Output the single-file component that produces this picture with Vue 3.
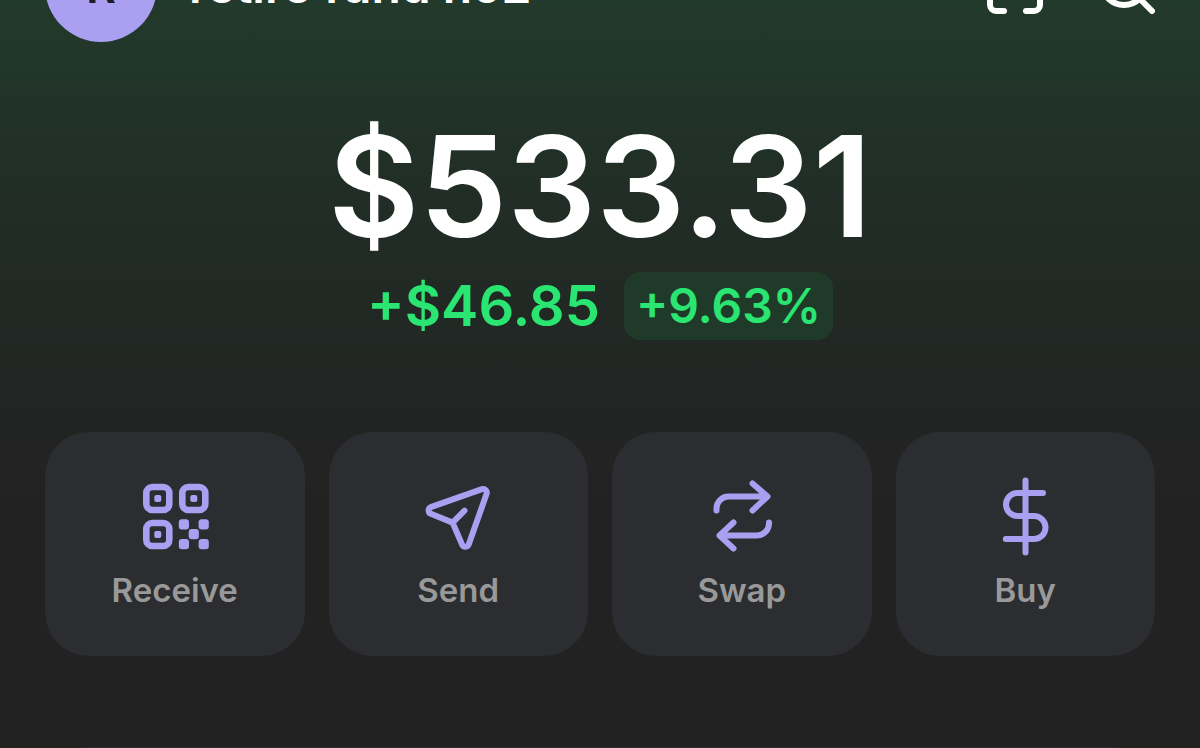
<script setup>
const account = {
  name: 'retire fund no2',
  initial: 'R',
};

const balance = {
  total: '$533.31',
  change: '+$46.85',
  percent: '+9.63%',
};

const actions = [
  { id: 'receive', label: 'Receive' },
  { id: 'send', label: 'Send' },
  { id: 'swap', label: 'Swap' },
  { id: 'buy', label: 'Buy' },
];
</script>

<template>
  <main class="wallet">
    <header class="account">
      <span class="account__avatar">{{ account.initial }}</span>
      <span class="account__name">{{ account.name }}</span>
      <button class="icon-btn" type="button" aria-label="Scan">
        <svg viewBox="0 0 56 56">
          <path d="M3 19V9a6 6 0 0 1 6-6h8M39 3h8a6 6 0 0 1 6 6v8M53 37v10a6 6 0 0 1-6 6h-8M17 53h-8a6 6 0 0 1-6-6v-10" />
        </svg>
      </button>
      <button class="icon-btn" type="button" aria-label="Search">
        <svg viewBox="0 0 56 56">
          <circle cx="25" cy="25" r="22" />
          <path d="M41 41l12 12" />
        </svg>
      </button>
    </header>

    <section class="balance">
      <h1 class="balance__total">{{ balance.total }}</h1>
      <div class="balance__row">
        <span class="balance__change">{{ balance.change }}</span>
        <span class="balance__badge">{{ balance.percent }}</span>
      </div>
    </section>

    <nav class="actions">
      <button v-for="action in actions" :key="action.id" class="action" type="button">
        <svg class="action__icon" viewBox="0 0 80 80">
          <template v-if="action.id === 'receive'">
            <g stroke-width="6.6">
              <rect x="11.3" y="11" width="23" height="23" rx="6" />
              <rect x="47.3" y="11" width="23" height="23" rx="6" />
              <rect x="11.3" y="47" width="23" height="23" rx="6" />
            </g>
            <g class="solid">
              <rect x="19.3" y="19" width="7" height="7" rx="2" />
              <rect x="55.3" y="19" width="7" height="7" rx="2" />
              <rect x="19.3" y="55" width="7" height="7" rx="2" />
              <rect x="43.8" y="43.2" width="10.2" height="10.2" rx="3" />
              <rect x="63.6" y="43.2" width="10.2" height="10.2" rx="3" />
              <rect x="53.7" y="53.1" width="10.2" height="10.2" rx="3" />
              <rect x="43.8" y="63" width="10.2" height="10.2" rx="3" />
              <rect x="63.6" y="63" width="10.2" height="10.2" rx="3" />
            </g>
          </template>
          <path
            v-else-if="action.id === 'send'"
            d="M12.7 31.2L64 13.2a3.6 3.6 0 0 1 4.6 4.6L50.8 68.3a3.6 3.6 0 0 1-6.7 .3L34.6 46.6L12.9 37.8a3.6 3.6 0 0 1-.2-6.6zM34.6 46.6L46.5 34.7"
          />
          <path
            v-else-if="action.id === 'swap'"
            d="M14.5 34.5v-2a12 12 0 0 1 12-12h38.5M50.5 7.5l15 13-15 14M67 46.5v1a12 12 0 0 1-12 12H17.5M31.5 46.5l-14 13 14 13"
          />
          <path
            v-else
            d="M40.5 4.5v72M58 17H32.5a11.5 11.5 0 0 0 0 23H49a11.5 11.5 0 0 1 0 23H20.8"
          />
        </svg>
        <span class="action__label">{{ action.label }}</span>
      </button>
    </nav>

    <section class="assets"></section>
  </main>
</template>

<style>
body {
  margin: 0;
  background: #222222;
}
</style>

<style scoped>
.wallet {
  box-sizing: border-box;
  height: 100vh;
  padding: 0 45px;
  overflow: hidden;
  font-family: Inter, 'Liberation Sans', sans-serif;
  font-weight: 600;
  color: #ffffff;
  background: linear-gradient(180deg, #223a2b 0, #212d26 200px, #222523 400px, #222222 500px);
}

button {
  padding: 0;
  border: 0;
  font: inherit;
  color: inherit;
  background: none;
  cursor: pointer;
}

svg {
  display: block;
  fill: none;
  stroke: currentColor;
  stroke-width: 6;
  stroke-linecap: round;
  stroke-linejoin: round;
}

/* Account bar, scrolled partly out of view */
.account {
  display: flex;
  align-items: center;
  gap: 56px;
  height: 112px;
  margin-top: -70px;
}

.account__avatar {
  flex: none;
  width: 112px;
  border-radius: 50%;
  font-size: 46px;
  line-height: 112px;
  text-align: center;
  color: #1d1b26;
  background: #ab9ff2;
}

.account__name {
  flex: 1;
  margin-left: -24px;
  font-size: 48px;
  line-height: 56px;
  white-space: nowrap;
}

.icon-btn,
.icon-btn svg {
  width: 56px;
  height: 56px;
}

/* Balance */
.balance {
  padding-top: 72px;
  text-align: center;
}

.balance__total {
  margin: 0;
  font-size: 140px;
  font-weight: 600;
  line-height: 144px;
}

.balance__row {
  display: flex;
  align-items: center;
  justify-content: center;
  gap: 24px;
  margin-top: 14px;
  color: #2ae571;
}

.balance__change {
  font-size: 56px;
  line-height: 68px;
}

.balance__badge {
  padding: 0 12px;
  border-radius: 16px;
  font-size: 48px;
  line-height: 68px;
  background: #203a2a;
}

/* Actions */
.actions {
  display: grid;
  grid-template-columns: repeat(4, 1fr);
  gap: 24px;
  margin-top: 92px;
}

.action {
  display: flex;
  flex-direction: column;
  align-items: center;
  gap: 14px;
  padding: 44px 0 46px;
  border-radius: 44px;
  background: #2c2d30;
}

.action__icon {
  width: 80px;
  height: 80px;
  color: #ab9ff2;
}

.solid {
  fill: currentColor;
  stroke: none;
}

.action__label {
  font-size: 33px;
  line-height: 40px;
  color: #999999;
}

.assets {
  height: 200px;
  margin-top: 91px;
  border-radius: 44px;
  background: #2f2d30;
}
</style>
